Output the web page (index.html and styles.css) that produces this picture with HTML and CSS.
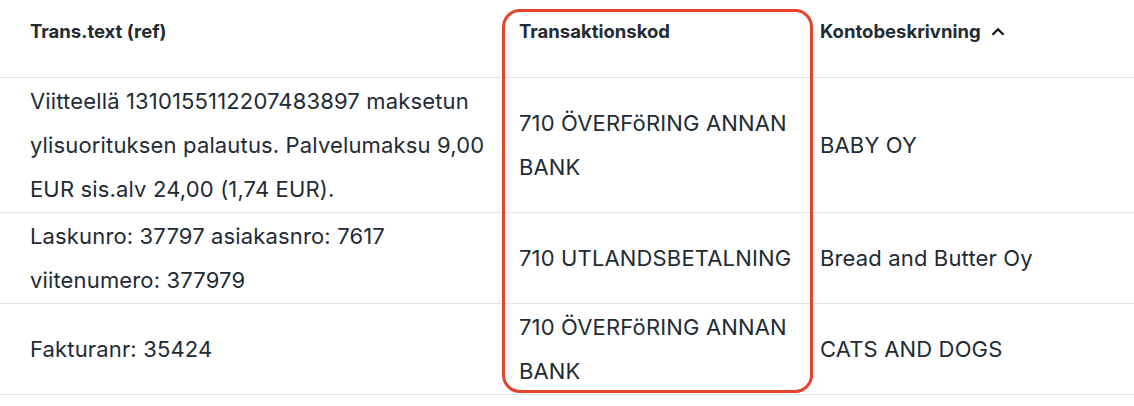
FILE: index.html
```html
<!DOCTYPE html>
<html>
<head>
<meta charset="utf-8">
<link rel="stylesheet" href="styles.css">
</head>
<body>
<div class="wrap">
  <table class="grid">
    <colgroup>
      <col class="c1"><col class="c2"><col class="c3">
    </colgroup>
    <thead>
      <tr>
        <th class="p1">Trans.text (ref)</th>
        <th class="p2">Transaktionskod</th>
        <th class="p3"><span class="sortable">Kontobeskrivning<svg class="chev" width="14" height="9" viewBox="0 0 14 9"><path d="M1.5 7.8 L7 2.2 L12.5 7.8" fill="none" stroke="#111" stroke-width="2.2"/></svg></span></th>
      </tr>
    </thead>
    <tbody>
      <tr class="r1">
        <td class="p1">Viitteellä 1310155112207483897 maksetun ylisuorituksen palautus. Palvelumaksu 9,00 EUR sis.alv 24,00 (1,74 EUR).</td>
        <td class="p2">710 ÖVERFöRING ANNAN BANK</td>
        <td class="p3">BABY OY</td>
      </tr>
      <tr>
        <td class="p1">Laskunro: 37797 asiakasnro: 7617 viitenumero: 377979</td>
        <td class="p2">710 UTLANDSBETALNING</td>
        <td class="p3">Bread and Butter Oy</td>
      </tr>
      <tr>
        <td class="p1">Fakturanr: 35424</td>
        <td class="p2">710 ÖVERFöRING ANNAN BANK</td>
        <td class="p3">CATS AND DOGS</td>
      </tr>
    </tbody>
  </table>
  <div class="highlight"></div>
</div>
</body>
</html>
```

FILE: styles.css
```css
html, body {
  margin: 0;
  padding: 0;
  background: #ffffff;
  overflow: hidden;
  height: 406px;
}
body {
  font-family: Inter, Roboto, "Liberation Sans", sans-serif;
  color: #222b34;
}
.wrap {
  position: relative;
  width: 1134px;
}
.grid {
  border-collapse: collapse;
  width: 1134px;
  table-layout: fixed;
}
.c1 { width: 504px; }
.c2 { width: 304px; }
.c3 { width: 326px; }
th {
  font-size: 18.5px;
  font-weight: 700;
  text-align: left;
  vertical-align: top;
  height: 77px;
  box-sizing: border-box;
  padding-top: 20px;
  line-height: 22px;
  border-bottom: 1px solid #e3e3e3;
  color: #222b34;
  white-space: nowrap;
}
.sortable {
  display: inline-flex;
  align-items: center;
}
.chev {
  margin-left: 10px;
  margin-top: 1px;
}
td {
  font-size: 22px;
  line-height: 44px;
  vertical-align: middle;
  padding-top: 1px;
  padding-bottom: 1px;
  border-bottom: 1px solid #e3e3e3;
  text-align: left;
  letter-spacing: 0.15px;
}
.p1 { padding-left: 30px; padding-right: 8px; }
.p2 { padding-left: 15px; padding-right: 4px; }
.p3 { padding-left: 12px; padding-right: 8px; }
.highlight {
  position: absolute;
  left: 502px;
  top: 9px;
  width: 311px;
  height: 384px;
  box-sizing: border-box;
  border: 3px solid #e5432b;
  border-radius: 18px;
  pointer-events: none;
}
```
